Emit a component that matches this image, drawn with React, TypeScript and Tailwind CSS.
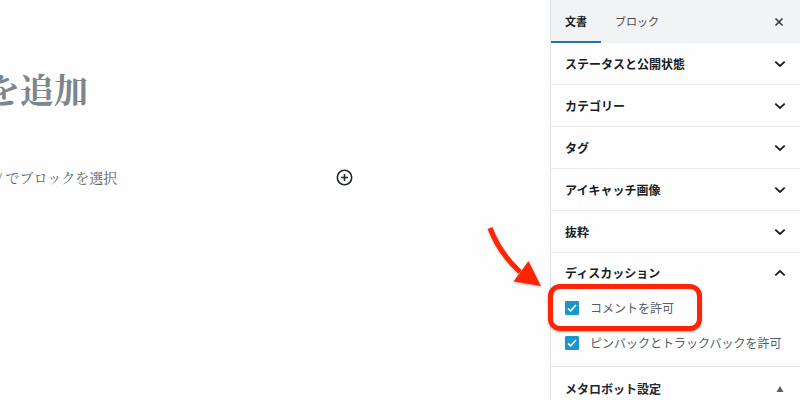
import { useState } from "react";
import type { ReactNode } from "react";

const closedPanels = ["ステータスと公開状態", "カテゴリー", "タグ", "アイキャッチ画像", "抜粋"];

function Chevron({ up = false }: { up?: boolean }) {
  return (
    <svg width="12" height="8" viewBox="0 0 12 8" fill="none" stroke="#191e23" strokeWidth="1.8" aria-hidden="true">
      <path d={up ? "M1.3 6.3 6 2l4.7 4.3" : "M1.3 1.7 6 6l4.7-4.3"} />
    </svg>
  );
}

function PanelToggle({ title, open = false }: { title: string; open?: boolean }) {
  return (
    <button
      type="button"
      aria-expanded={open}
      className={
        open
          ? "flex h-10 w-full items-center justify-between px-[14px] text-xs font-bold text-[#191e23]"
          : "flex h-[42px] w-full items-center justify-between border-b border-[#e8eaec] px-[14px] text-xs font-bold text-[#191e23]"
      }
    >
      {title}
      <Chevron up={open} />
    </button>
  );
}

function CheckRow({ id, label, children }: { id: string; label: string; children?: ReactNode }) {
  const [checked, setChecked] = useState(true);

  return (
    <div className="relative flex h-[35px] items-center gap-[11px] pl-[14px]">
      <span className="relative h-[14px] w-[14px]">
        <input
          id={id}
          type="checkbox"
          checked={checked}
          onChange={(e) => setChecked(e.target.checked)}
          className="peer block h-[14px] w-[14px] appearance-none rounded-[1px] border border-[#6c7781] bg-white checked:border-[#1b95ce] checked:bg-[#1b95ce]"
        />
        <svg
          viewBox="0 0 14 14"
          fill="none"
          stroke="white"
          strokeWidth="1.6"
          className="pointer-events-none absolute inset-0 hidden h-[14px] w-[14px] peer-checked:block"
          aria-hidden="true"
        >
          <path d="M3 7.3 5.6 9.8 11 4" />
        </svg>
      </span>
      <label htmlFor={id} className="text-xs whitespace-nowrap text-[#555d66]">
        {label}
      </label>
      {children}
    </div>
  );
}

function Highlight() {
  return (
    <div className="pointer-events-none">
      <div className="absolute top-[-6px] left-[-3px] h-[47px] w-[154px] rounded-xl border-5 border-[#ff2405] shadow-[0_1px_2px_rgba(0,0,0,0.3)]" />
      <svg
        width="60"
        height="66"
        viewBox="0 0 60 66"
        className="absolute top-[-66px] left-[-66px] drop-shadow-[0_1px_1px_rgba(0,0,0,0.25)]"
        aria-hidden="true"
      >
        <path d="M5 4C11 20 20 34 35 48" fill="none" stroke="#ff2405" strokeWidth="5" />
        <path d="M56 62 43.5 37 28.5 57.5Z" fill="#ff2405" />
      </svg>
    </div>
  );
}

function Editor() {
  return (
    <main className="min-w-0 flex-1 overflow-hidden bg-[#fefefe] pt-[65px] font-['Noto_Serif_CJK_JP','Noto_Serif_JP','Noto_Sans_CJK_JP',serif]">
      <h1 className="-ml-[14px] text-[34px] leading-[48px] font-bold whitespace-nowrap text-[#7d858f]">を追加</h1>
      <div className="mt-[52px] flex items-start justify-between pr-[197px]">
        <p className="-ml-[3px] text-sm leading-6 whitespace-nowrap text-[#62666b]">/ でブロックを選択</p>
        <button type="button" aria-label="ブロックの追加" className="pt-1">
          <svg width="17" height="17" viewBox="0 0 17 17" fill="none" stroke="#23282d" strokeWidth="1.6" aria-hidden="true">
            <circle cx="8.5" cy="8.5" r="7.2" />
            <path d="M8.5 5v7M5 8.5h7" />
          </svg>
        </button>
      </div>
    </main>
  );
}

export default function App() {
  return (
    <div className="flex h-screen overflow-hidden bg-white font-['Noto_Sans_CJK_JP',sans-serif]">
      <Editor />
      <aside className="w-[250px] shrink-0 border-l border-[#e2e4e7] bg-[#fefefe]">
        <header className="flex h-[43px] items-stretch bg-[#f1f3f5] text-[11px] text-[#191e23]">
          <button type="button" className="border-b-2 border-[#2871ad] px-[14px] pt-[2px] font-bold">
            文書
          </button>
          <button type="button" className="border-b-2 border-transparent px-[14px] pt-[2px] text-[#444b52]">
            ブロック
          </button>
          <button type="button" aria-label="設定を閉じる" className="ml-auto pr-4">
            <svg width="10" height="10" viewBox="0 0 10 10" fill="none" stroke="#32373c" strokeWidth="1.6" aria-hidden="true">
              <path d="m1.5 1.5 7 7m0-7-7 7" />
            </svg>
          </button>
        </header>

        {closedPanels.map((title) => (
          <PanelToggle key={title} title={title} />
        ))}

        <section className="border-b border-[#e2e4e7] pb-[6px]">
          <PanelToggle title="ディスカッション" open />
          <div className="-mt-[3px]">
            <CheckRow id="allow-comments" label="コメントを許可">
              <Highlight />
            </CheckRow>
            <CheckRow id="allow-pings" label="ピンバックとトラックバックを許可" />
          </div>
        </section>

        <button
          type="button"
          aria-expanded={true}
          className="flex h-11 w-full items-center justify-between pr-4 pl-[14px] text-xs font-bold text-[#23282d]"
        >
          メタロボット設定
          <svg width="8" height="6" viewBox="0 0 8 6" fill="#555d66" aria-hidden="true">
            <path d="M4 0 7.5 6h-7z" />
          </svg>
        </button>
      </aside>
    </div>
  );
}
